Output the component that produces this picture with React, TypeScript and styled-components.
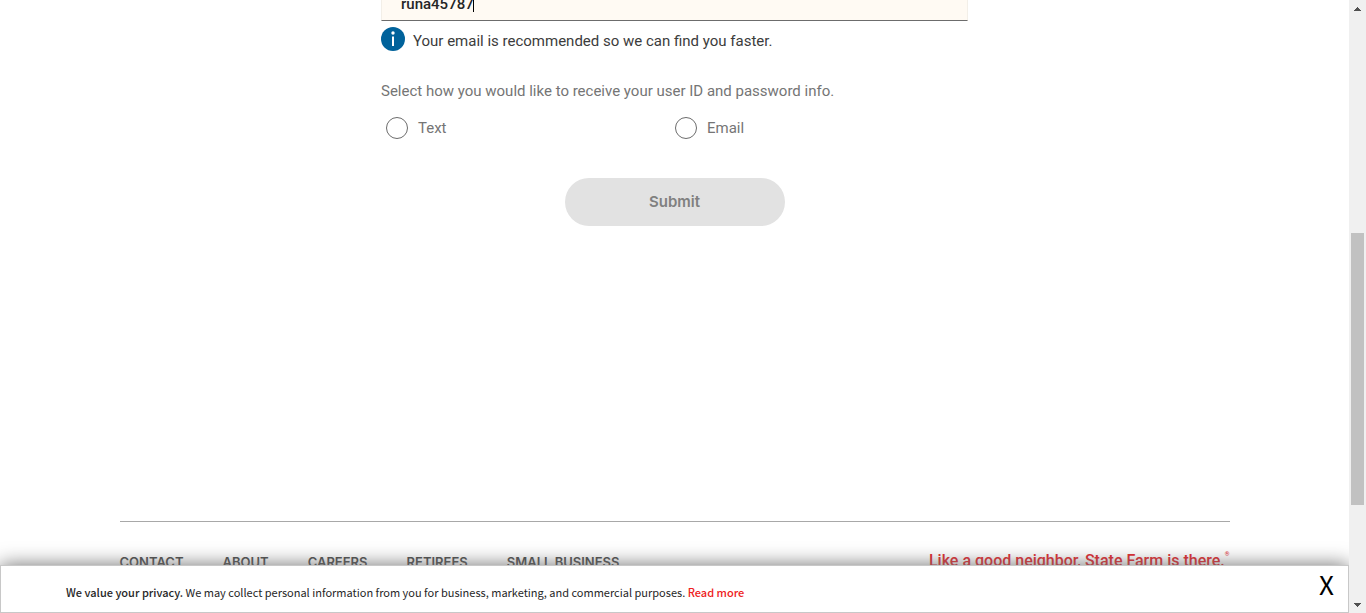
import React from "react";
import styled, { createGlobalStyle } from "styled-components";

const GlobalStyle = createGlobalStyle`
  *, *::before, *::after { box-sizing: border-box; }
  body {
    margin: 0;
    background: #fff;
    overflow: hidden;
    font-family: Roboto, "Liberation Sans", sans-serif;
  }
`;

const Shell = styled.div`
  display: flex;
  height: 100vh;
`;

const Page = styled.div`
  position: relative;
  flex: 1;
  min-width: 0;
  overflow: hidden;
`;

const Form = styled.form`
  width: 100%;
  max-width: 587px;
  min-height: 556px;
  margin: -35px auto 0;
`;

const Field = styled.div`
  position: relative;
`;

const TextInput = styled.input`
  display: block;
  width: 100%;
  height: 56px;
  padding: 22px 19px 0;
  border: 1px solid #f3efe8;
  border-bottom-color: #6c6c6c;
  border-radius: 0;
  outline: none;
  background: #fffaf3;
  color: #262626;
  font: 500 15px/20px Roboto, "Liberation Sans", sans-serif;
`;

const Caret = styled.span`
  position: absolute;
  left: 92px;
  bottom: 9px;
  width: 1px;
  height: 18px;
  background: #000;
`;

const Hint = styled.p`
  display: flex;
  align-items: flex-start;
  gap: 8px;
  margin: 6px 0 0;
  color: #3c3c3c;
  font-size: 15px;
  line-height: 28px;
`;

const InfoIcon = styled.svg`
  flex: none;
  width: 24px;
  height: 24px;
`;

const Choices = styled.fieldset`
  display: grid;
  grid-template-columns: 1fr 1fr;
  margin: 24px 0 0;
  padding: 0 9px 0 0;
  border: 0;
  color: #757575;
  font-size: 15px;
  line-height: 24px;
`;

const Legend = styled.legend`
  margin-bottom: 13px;
  padding: 0;
`;

const Choice = styled.label`
  display: flex;
  gap: 10px;
  align-items: center;
  padding-left: 5px;
`;

const Radio = styled.input`
  appearance: none;
  flex: none;
  width: 22px;
  height: 22px;
  margin: 0;
  border: 1px solid #6c6c6c;
  border-radius: 50%;
  background: #fff;
`;

const Submit = styled.button`
  display: block;
  width: 220px;
  height: 48px;
  margin: 38px auto 0;
  border: 0;
  border-radius: 24px;
  background: #e2e2e2;
  color: #808080;
  font: 600 15px/24px Inter, "Liberation Sans", sans-serif;
`;

const Footer = styled.footer`
  display: flex;
  justify-content: space-between;
  align-items: flex-start;
  max-width: 1110px;
  margin: 0 auto;
  padding-top: 28px;
  border-top: 1px solid #a8a8a8;
`;

const FooterNav = styled.nav`
  display: flex;
  gap: 39px;
  padding-top: 2px;
`;

const FooterLink = styled.a`
  color: #4a4a4a;
  font: 600 13px/20px Inter, "Liberation Sans", sans-serif;
  text-decoration: none;
`;

const Slogan = styled.p`
  display: flex;
  margin: 0;
  color: #e0262b;
  font-size: 16px;
  font-weight: 500;
  line-height: 22px;
`;

const Registered = styled.span`
  font-size: 6px;
  font-weight: 400;
  line-height: 8px;
`;

const Banner = styled.aside`
  position: absolute;
  right: 0;
  bottom: 0;
  left: 0;
  display: flex;
  align-items: flex-start;
  justify-content: space-between;
  height: 48px;
  padding: 0 14px 0 65px;
  border: 1px solid #c8c8c8;
  background: #fff;
  box-shadow: 0 0 20px #707070;
  font-family: "Noto Sans CJK SC", "Noto Sans", sans-serif;
`;

const BannerText = styled.p`
  margin: 0;
  padding-top: 17px;
  color: #262626;
  font-size: 11px;
  line-height: 18px;
`;

const Strong = styled.strong`
  font-weight: 500;
`;

const ReadMore = styled.a`
  color: #ee2222;
  font-weight: 500;
  text-decoration: none;
`;

const Close = styled.button`
  padding: 0;
  border: 0;
  background: none;
  color: #000;
  font: 400 26px/36px "Noto Sans CJK SC", "Noto Sans", sans-serif;
`;

const Scrollbar = styled.div`
  display: grid;
  grid-template-rows: 17px 216fr 272fr 91fr 17px;
  justify-items: center;
  align-items: center;
  flex: none;
  width: 17px;
  background: #f0f0f0;
`;

const Thumb = styled.div`
  grid-row: 3;
  width: 13px;
  height: 100%;
  background: #c1c1c1;
`;

const Arrow = styled.svg<{ $row: number }>`
  grid-row: ${(p) => p.$row};
  width: 7px;
  height: 4px;
  fill: #505050;
`;

const links = ["CONTACT", "ABOUT", "CAREERS", "RETIREES", "SMALL BUSINESS"];

export default function App() {
  return (
    <>
      <GlobalStyle />
      <Shell>
        <Page>
          <Form onSubmit={(e) => e.preventDefault()}>
            <Field>
              <TextInput type="text" aria-label="Email" defaultValue="runa45787" />
              <Caret />
            </Field>
            <Hint>
              <InfoIcon viewBox="0 0 24 24" aria-hidden="true">
                <circle cx="12" cy="12" r="12" fill="#00629b" />
                <circle cx="12" cy="6" r="1.7" fill="#fff" />
                <rect x="11" y="9.5" width="2" height="9.5" fill="#fff" />
              </InfoIcon>
              Your email is recommended so we can find you faster.
            </Hint>
            <Choices>
              <Legend>Select how you would like to receive your user ID and password info.</Legend>
              <Choice>
                <Radio type="radio" name="delivery" value="text" />
                Text
              </Choice>
              <Choice>
                <Radio type="radio" name="delivery" value="email" />
                Email
              </Choice>
            </Choices>
            <Submit type="submit" disabled>
              Submit
            </Submit>
          </Form>
          <Footer>
            <FooterNav aria-label="Footer">
              {links.map((label) => (
                <FooterLink href="#" key={label}>
                  {label}
                </FooterLink>
              ))}
            </FooterNav>
            <Slogan>
              Like a good neighbor, State Farm is there.
              <Registered>®</Registered>
            </Slogan>
          </Footer>
          <Banner aria-label="Privacy notice">
            <BannerText>
              <Strong>We value your privacy.</Strong> We may collect personal information from you for
              business, marketing, and commercial purposes. <ReadMore href="#">Read more</ReadMore>
            </BannerText>
            <Close type="button">X</Close>
          </Banner>
        </Page>
        <Scrollbar aria-hidden="true">
          <Arrow $row={1} viewBox="0 0 7 4">
            <path d="M3 0h1v1h1v1h1v1h1v1H0V3h1V2h1V1h1z" />
          </Arrow>
          <Thumb />
          <Arrow $row={5} viewBox="0 0 7 4">
            <path d="M0 0h7v1H6v1H5v1H4v1H3V3H2V2H1V1H0z" />
          </Arrow>
        </Scrollbar>
      </Shell>
    </>
  );
}
